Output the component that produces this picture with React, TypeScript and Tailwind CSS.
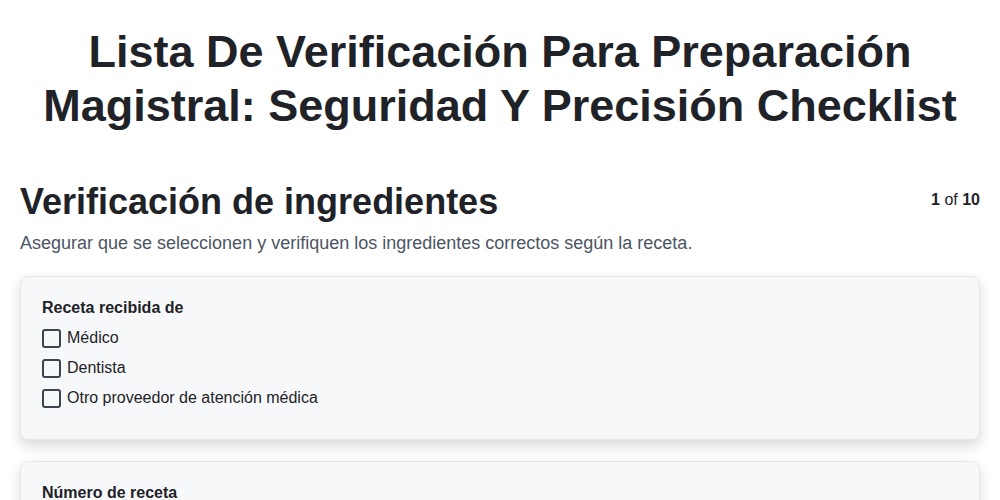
const options = ["Médico", "Dentista", "Otro proveedor de atención médica"];

function Checkbox({ label }: { label: string }) {
  return (
    <label className="flex items-center gap-[6px] h-[30px]">
      <span className="w-[19px] h-[19px] rounded-[3px] border-2 border-[#3d4350] bg-[#f7f8fa]" />
      <span className="text-[16px] text-[#1f2328]">{label}</span>
    </label>
  );
}

export default function App() {
  return (
    <div
      className="min-h-[500px] bg-white text-[#1f2328]"
      style={{ fontFamily: '"Liberation Sans", Arial, sans-serif' }}
    >
      <h1 className="pt-[25px] px-10 text-center text-[45px] leading-[54px] font-bold">
        Lista De Verificación Para Preparación
        <br />
        Magistral: Seguridad Y Precisión Checklist
      </h1>
      <div className="px-5 mt-[47px]">
        <div className="flex items-start justify-between">
          <h2 className="text-[36px] leading-[44px] font-bold">
            Verificación de ingredientes
          </h2>
          <div className="text-[16px] mt-[8px]">
            <span className="font-bold">1</span> of{" "}
            <span className="font-bold">10</span>
          </div>
        </div>
        <p className="mt-[6px] text-[18px] leading-[27px] text-[#4b5563]">
          Asegurar que se seleccionen y verifiquen los ingredientes correctos según la receta.
        </p>
        <div className="mt-[19px] flex flex-col gap-[21px]">
          <div className="rounded-lg border border-[#e5e7eb] bg-[#f7f8fa] shadow-[0_6px_14px_rgba(0,0,0,0.15)] px-[21px] pt-[19px] pb-[26px]">
            <div className="text-[16px] font-bold mb-[3px]">Receta recibida de</div>
            {options.map((o) => (
              <Checkbox key={o} label={o} />
            ))}
          </div>
          <div className="rounded-lg border border-[#e5e7eb] bg-[#f7f8fa] shadow-[0_6px_14px_rgba(0,0,0,0.15)] px-[21px] pt-[19px] pb-[26px]">
            <div className="text-[16px] font-bold">Número de receta</div>
            <div className="mt-3 h-10 rounded border border-[#d1d5db] bg-white" />
          </div>
        </div>
      </div>
    </div>
  );
}
